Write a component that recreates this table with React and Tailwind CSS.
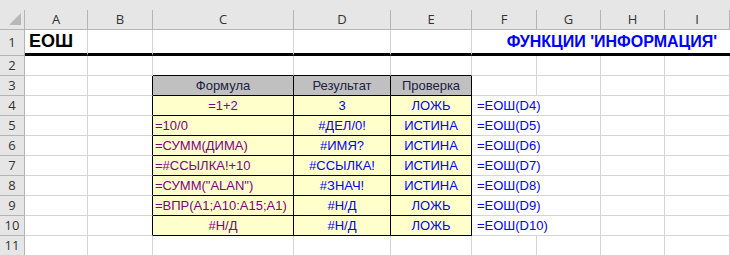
const cols = ["A", "B", "C", "D", "E", "F", "G", "H", "I"];

const rows = [
  { f: "=1+2", r: "3", p: "ЛОЖЬ", e: "=ЕОШ(D4)", center: true },
  { f: "=10/0", r: "#ДЕЛ/0!", p: "ИСТИНА", e: "=ЕОШ(D5)" },
  { f: "=СУММ(ДИМА)", r: "#ИМЯ?", p: "ИСТИНА", e: "=ЕОШ(D6)" },
  { f: "=#ССЫЛКА!+10", r: "#ССЫЛКА!", p: "ИСТИНА", e: "=ЕОШ(D7)" },
  { f: '=СУММ("ALAN")', r: "#ЗНАЧ!", p: "ИСТИНА", e: "=ЕОШ(D8)" },
  { f: "=ВПР(A1;A10:A15;A1)", r: "#Н/Д", p: "ЛОЖЬ", e: "=ЕОШ(D9)" },
  { f: "#Н/Д", r: "#Н/Д", p: "ЛОЖЬ", e: "=ЕОШ(D10)", center: true },
];

const cell = "h-[20px] border-r border-b border-[#d4d4d4] flex items-center leading-[15px] whitespace-nowrap overflow-visible";
const rowHead = "h-[20px] bg-[#e6e6e6] border-r border-b border-[#b4b4b4] flex items-center justify-center text-[13px] text-[#333] font-['Open_Sans',sans-serif]";
const tBase = "h-[20px] border-r border-b border-black flex items-center leading-[15px] whitespace-nowrap text-[13px]";
const tCell = `${tBase} bg-[#ffffcc]`;
const tHead = `${tBase} bg-[#c0c0c0] justify-center text-[#222244]`;

function Corner() {
  return (
    <div className="h-[20px] bg-[#e6e6e6] border-r border-b border-[#b4b4b4] relative">
      <svg width="14" height="14" className="absolute right-[2px] bottom-[3px]">
        <polygon points="13,1 13,13 1,13" fill="#b8b8b8" />
      </svg>
    </div>
  );
}

export default function App() {
  return (
    <div className="w-[730px] h-[255px] overflow-hidden bg-white font-['Liberation_Sans',Arial,sans-serif]">
      <div className="h-[10px] bg-[#e6e6e6]" />
      <div className="grid grid-cols-[25px_63px_65px_141px_97px_81px_65px_64px_64px_65px]">
        {/* column headers */}
        <Corner />
        {cols.map((c) => (
          <div key={c} className="h-[20px] bg-[#e6e6e6] border-r border-b border-[#b4b4b4] flex items-center justify-center text-[13px] text-[#333] font-['Open_Sans',sans-serif]">
            {c}
          </div>
        ))}

        {/* row 1 */}
        <div className="h-[26px] bg-[#e6e6e6] border-r border-b border-[#b4b4b4] flex items-center justify-center text-[13px] text-[#333] font-['Open_Sans',sans-serif]">1</div>
        <div className="h-[26px] border-r border-r-[#d4d4d4] border-b-[3px] border-b-black flex items-center pl-[4px] text-[18px] font-bold text-black whitespace-nowrap">ЕОШ</div>
        <div className="h-[26px] border-r border-r-[#d4d4d4] border-b-[3px] border-b-black" />
        <div className="h-[26px] border-r border-r-[#d4d4d4] border-b-[3px] border-b-black" />
        <div className="h-[26px] border-r border-r-[#d4d4d4] border-b-[3px] border-b-black" />
        <div className="h-[26px] border-r border-r-[#d4d4d4] border-b-[3px] border-b-black" />
        <div className="col-span-4 h-[26px] border-b-[3px] border-b-black flex items-center justify-end pr-[13px] text-[16px] font-bold text-[#0000ff] whitespace-nowrap">
          ФУНКЦИИ 'ИНФОРМАЦИЯ'
        </div>

        {/* row 2 */}
        <div className={rowHead}>2</div>
        <div className={cell} />
        <div className={cell} />
        <div className={`${cell} border-b-black`} />
        <div className={`${cell} border-b-black`} />
        <div className={`${cell} border-b-black`} />
        <div className={cell} />
        <div className={cell} />
        <div className={cell} />
        <div className={cell} />

        {/* row 3: table header */}
        <div className={rowHead}>3</div>
        <div className={cell} />
        <div className={`${cell} border-r-black`} />
        <div className={tHead}>Формула</div>
        <div className={tHead}>Результат</div>
        <div className={tHead}>Проверка</div>
        <div className={cell} />
        <div className={cell} />
        <div className={cell} />
        <div className={cell} />

        {/* rows 4-10 */}
        {rows.map((r, i) => (
          <div key={i} className="contents">
            <div className={rowHead}>{i + 4}</div>
            <div className={cell} />
            <div className={`${cell} border-r-black`} />
            <div className={`${tCell} text-[#800080] ${r.center ? "justify-center" : "pl-[2px]"}`}>{r.f}</div>
            <div className={`${tCell} justify-center text-[#0000ff]`}>{r.r}</div>
            <div className={`${tCell} justify-center text-[#0000ff]`}>{r.p}</div>
            <div className={`${cell} col-span-2 pl-[5px] text-[13px] text-[#0000ff]`}>{r.e}</div>
            <div className={cell} />
            <div className={cell} />
          </div>
        ))}

        {/* row 11 */}
        <div className={rowHead}>11</div>
        {cols.map((c) => (
          <div key={c} className={cell} />
        ))}
      </div>
    </div>
  );
}
